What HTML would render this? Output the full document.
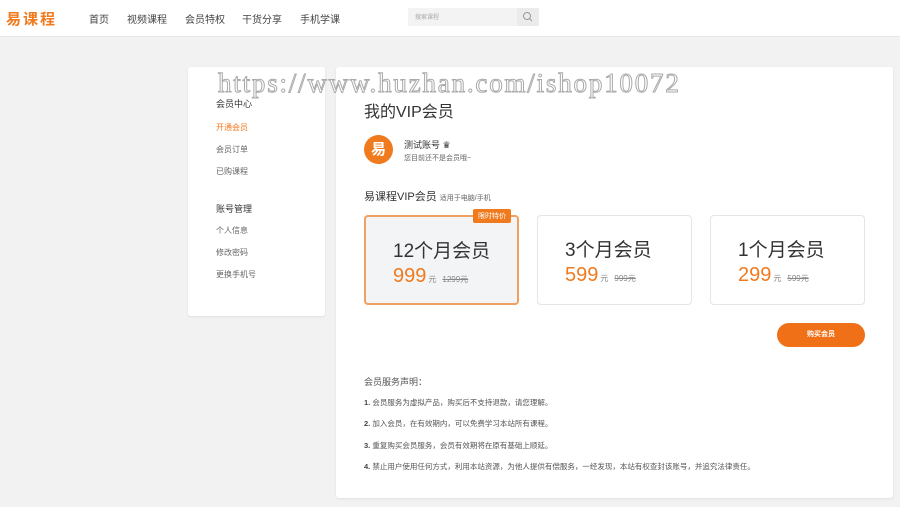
<!DOCTYPE html><html><head><meta charset="utf-8"><style>
*{margin:0;padding:0;box-sizing:border-box}
body{width:900px;height:507px;background:#f2f2f2;font-family:"Liberation Sans","Noto Sans CJK SC",sans-serif;position:relative;overflow:hidden;color:#333}
.hd{position:absolute;left:0;top:0;width:900px;height:37px;background:#fff;border-bottom:1px solid #e6e6e6}
.logo{position:absolute;left:6px;top:8px;font-size:15px;font-weight:bold;color:#f07a1e;letter-spacing:2px}
.nav{position:absolute;top:11px;font-size:10px;color:#444}
.search{position:absolute;left:408px;top:8px;width:131px;height:18px;background:#f3f3f3}
.search span{position:absolute;left:7px;top:4px;font-size:6px;color:#aaa}
.search i{position:absolute;right:0;top:0;width:22px;height:18px;background:#ebebeb}
.card{position:absolute;background:#fff;border-radius:3px;box-shadow:0 1px 2px rgba(0,0,0,.08)}
.side div{position:absolute;left:28px;font-size:8px;color:#666}
.t{position:absolute}
.plan{position:absolute;top:215px;width:155px;height:90px;border:1px solid #e5e5e5;border-radius:4px;background:#fff}
.plan .n{position:absolute;left:27px;top:19px;font-size:19px;color:#333}
.plan .p{position:absolute;left:27px;top:48px;font-size:20px;color:#f07a1e}
.plan .p small{font-size:8px;color:#888;margin-left:2px}
.plan .p s{font-size:8px;color:#888;margin-left:6px}
.r{position:absolute;left:364px;font-size:7.5px;color:#555}
.r b{color:#444}
</style></head><body>
<div class="hd"><div class="logo">易课程</div>
<div class="nav" style="left:89px">首页</div><div class="nav" style="left:127px">视频课程</div><div class="nav" style="left:185px">会员特权</div><div class="nav" style="left:242px">干货分享</div><div class="nav" style="left:300px">手机学课</div>
<div class="search"><span>搜索课程</span><i><svg width="22" height="18"><circle cx="10" cy="8" r="3.5" fill="none" stroke="#999" stroke-width="1"/><line x1="12.5" y1="10.5" x2="15" y2="13" stroke="#999"/></svg></i></div></div>
<div class="card side" style="left:188px;top:67px;width:137px;height:249px">
<div style="top:30px;font-size:9px;color:#333">会员中心</div>
<div style="top:55px;color:#f07a1e">开通会员</div>
<div style="top:77px">会员订单</div>
<div style="top:99px">已购课程</div>
<div style="top:135px;font-size:9px;color:#333">账号管理</div>
<div style="top:158px">个人信息</div>
<div style="top:180px">修改密码</div>
<div style="top:202px">更换手机号</div>
</div>
<div class="card" style="left:336px;top:67px;width:557px;height:431px"></div>
<div class="t" style="left:218px;top:68px;font-family:'Liberation Serif',serif;font-size:27px;color:#fff;-webkit-text-stroke:1px #aaa;letter-spacing:1.8px;white-space:nowrap">https://www.huzhan.com/ishop10072</div>
<div class="t" style="left:364px;top:98px;font-size:16px;color:#333">我的VIP会员</div>
<div class="t" style="left:364px;top:135px;width:29px;height:29px;border-radius:50%;background:#f07a1e;color:#fff;font-size:15px;font-weight:bold;text-align:center;line-height:29px">易</div>
<div class="t" style="left:404px;top:138px;font-size:9px;color:#333">测试账号 ♛</div>
<div class="t" style="left:404px;top:153px;font-size:7px;color:#666">您目前还不是会员哦~</div>
<div class="t" style="left:364px;top:188px;font-size:11px;color:#333">易课程VIP会员 <span style="font-size:7px;color:#666">适用于电脑/手机</span></div>
<div class="plan" style="left:364px;background:#f3f4f5;border:2px solid #f0a060"><div class="n">12个月会员</div><div class="p">999<small>元</small><s>1299元</s></div>
<div style="position:absolute;right:6px;top:-8px;background:#f07a1e;color:#fff;font-size:7px;padding:2px 5px;border-radius:2px">限时特价</div></div>
<div class="plan" style="left:537px"><div class="n">3个月会员</div><div class="p">599<small>元</small><s>999元</s></div></div>
<div class="plan" style="left:710px"><div class="n">1个月会员</div><div class="p">299<small>元</small><s>599元</s></div></div>
<div class="t" style="left:777px;top:323px;width:88px;height:24px;border-radius:12px;background:#f07018;color:#fff;font-size:7px;font-weight:bold;text-align:center;line-height:24px">购买会员</div>
<div class="t" style="left:364px;top:375px;font-size:9px;color:#555">会员服务声明：</div>
<div class="r" style="top:397px"><b>1.</b> 会员服务为虚拟产品，购买后不支持退款，请您理解。</div>
<div class="r" style="top:418px"><b>2.</b> 加入会员，在有效期内，可以免费学习本站所有课程。</div>
<div class="r" style="top:440px"><b>3.</b> 重复购买会员服务，会员有效期将在原有基础上顺延。</div>
<div class="r" style="top:461px"><b>4.</b> 禁止用户使用任何方式，利用本站资源，为他人提供有偿服务，一经发现，本站有权查封该账号，并追究法律责任。</div>
</body></html>
